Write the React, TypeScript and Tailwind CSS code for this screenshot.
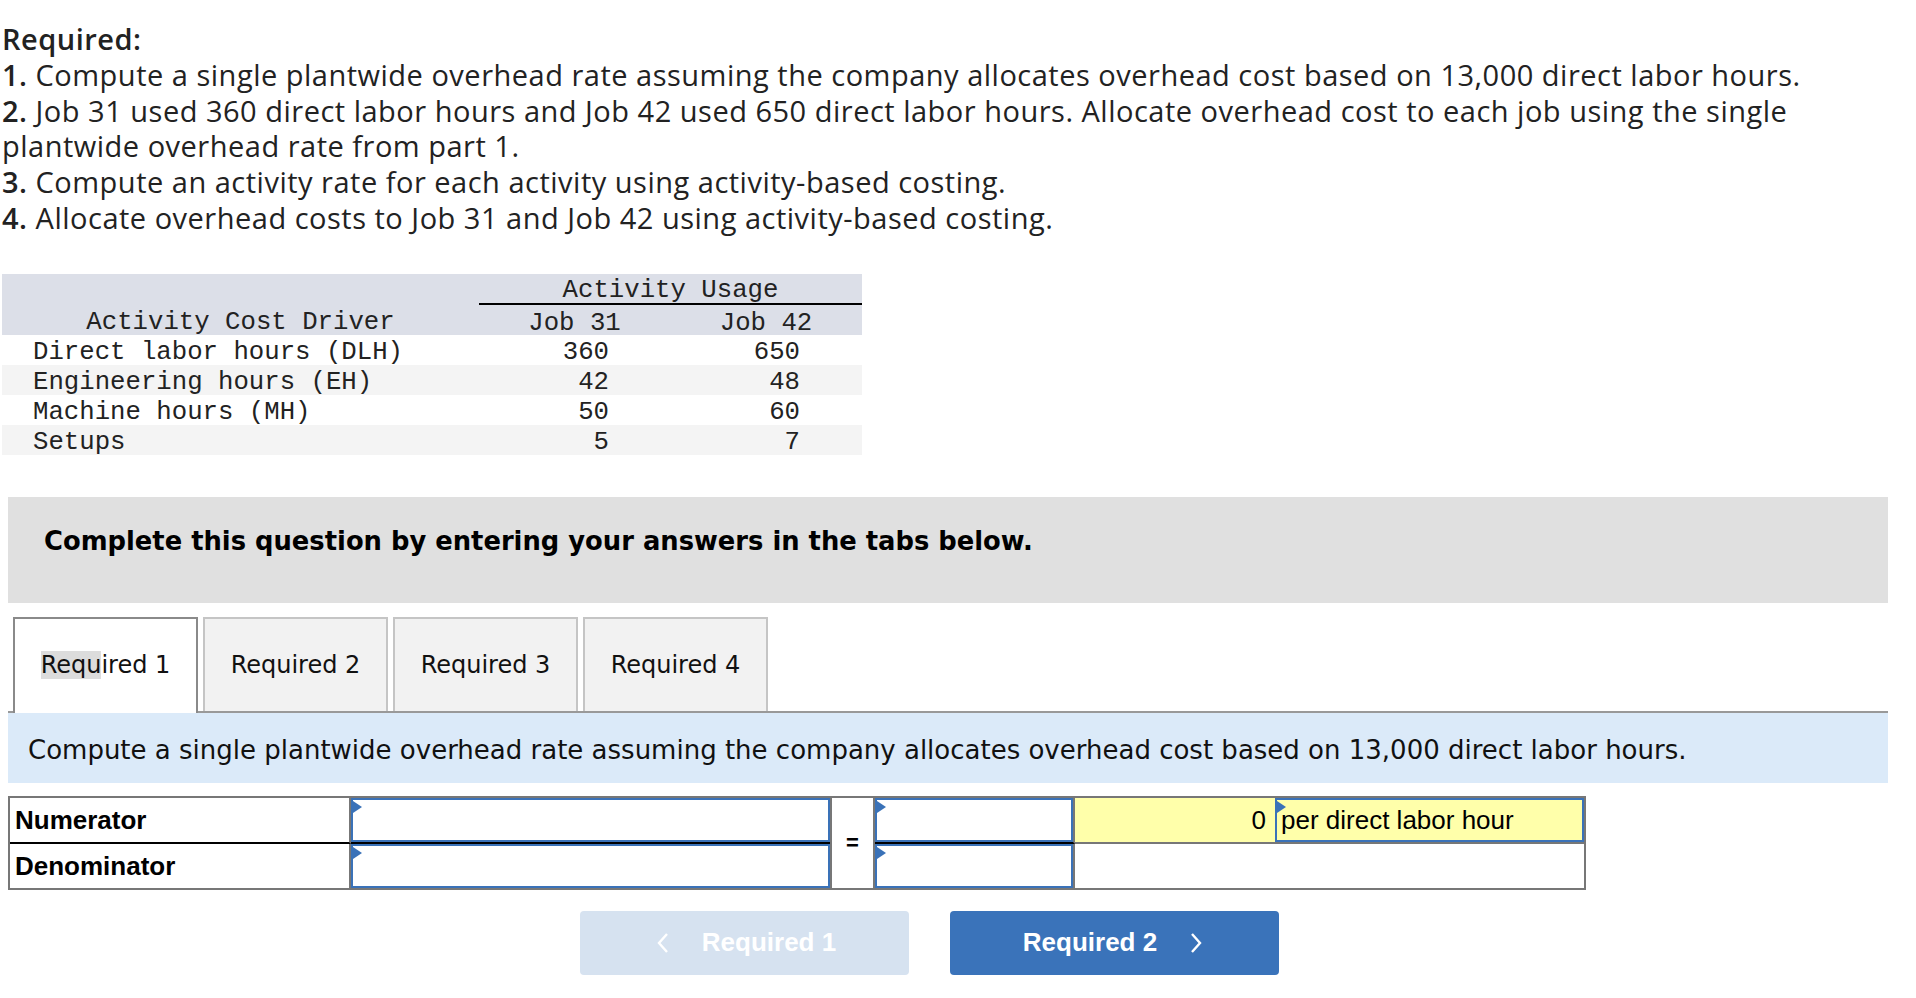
import React from "react";

const rows = [
	{ name: "Direct labor hours (DLH)", a: "360", b: "650" },
	{ name: "Engineering hours (EH)", a: "42", b: "48" },
	{ name: "Machine hours (MH)", a: "50", b: "60" },
	{ name: "Setups", a: "5", b: "7" },
];

function Flag() {
	return (
		<span className="absolute left-0 top-[1px] h-0 w-0 border-y-[6px] border-y-transparent border-l-[9px] border-l-[#3a72b8]" />
	);
}

function BlankInput({ yellow = false, children }: { yellow?: boolean; children?: React.ReactNode }) {
	return (
		<div
			className={`relative flex h-full w-full items-center border-2 border-[#3a72b8] px-[4px] ${
				yellow ? "bg-[#ffffaa]" : "bg-white"
			}`}
		>
			<Flag />
			{children}
		</div>
	);
}

export default function App() {
	const tabs = ["Required 1", "Required 2", "Required 3", "Required 4"];

	return (
		<div className="min-h-screen bg-white px-[2px] pt-[21px] text-[#222]">
			{/* question text */}
			<div className="font-['Open_Sans',sans-serif] text-[29px] leading-[35.8px] tracking-[0.5px]">
				<p className="font-semibold">Required:</p>
				<p>
					<b className="font-semibold">1.</b> Compute a single plantwide overhead rate assuming the company
					allocates overhead cost based on 13,000 direct labor hours.
				</p>
				<p>
					<b className="font-semibold">2.</b> Job 31 used 360 direct labor hours and Job 42 used 650 direct
					labor hours. Allocate overhead cost to each job using the single
					<br />
					plantwide overhead rate from part 1.
				</p>
				<p>
					<b className="font-semibold">3.</b> Compute an activity rate for each activity using activity-based
					costing.
				</p>
				<p>
					<b className="font-semibold">4.</b> Allocate overhead costs to Job 31 and Job 42 using activity-based
					costing.
				</p>
			</div>

			{/* activity table */}
			<table className="mt-[38px] w-[860px] border-collapse font-['Liberation_Mono',monospace] text-[25.7px] leading-[26px]">
				<thead className="bg-[#dcdfe8]">
					<tr className="h-[30px]">
						<th className="w-[477px]" />
						<th colSpan={2} className="border-b-2 border-black pt-[6px] text-center font-normal leading-[22px]">
							Activity Usage
						</th>
					</tr>
					<tr className="h-[30px]">
						<th className="pt-[7px] text-center font-normal leading-[23px]">Activity Cost Driver</th>
						<th className="w-[191px] pt-[7px] text-center font-normal leading-[23px]">Job 31</th>
						<th className="w-[192px] pt-[7px] text-center font-normal leading-[23px]">Job 42</th>
					</tr>
				</thead>
				<tbody>
					{rows.map((r, i) => (
						<tr key={r.name} className={`h-[30px] ${i % 2 === 1 ? "bg-[#f4f4f4]" : "bg-white"}`}>
							<td className="pl-[31px] pt-[5px] leading-[25px]">{r.name}</td>
							<td className="pr-[61px] pt-[5px] text-right leading-[25px]">{r.a}</td>
							<td className="pr-[62px] pt-[5px] text-right leading-[25px]">{r.b}</td>
						</tr>
					))}
				</tbody>
			</table>

			{/* answer area */}
			<div className="ml-[6px] mt-[42px] w-[1880px]">
				<div className="h-[106px] bg-[#e0e0e0] pl-[36px] pt-[30px] font-['DejaVu_Sans',sans-serif] text-[25.8px] font-bold leading-[28px] text-black">
					Complete this question by entering your answers in the tabs below.
				</div>

				<div className="mt-[14px] flex items-end gap-[5px] border-b-2 border-[#999] pl-[5px] font-['DejaVu_Sans',sans-serif] text-[24px] text-[#111]">
					{tabs.map((t, i) =>
						i === 0 ? (
							<div
								key={t}
								className="relative -mb-[2px] flex h-[96px] w-[185px] items-center justify-center border-x-2 border-t-2 border-[#8a8a8a] bg-white pb-[2px]"
							>
								<span>
									<span className="bg-[#dcdcdc]">Requ</span>ired 1
								</span>
							</div>
						) : (
							<div
								key={t}
								className="flex h-[94px] w-[185px] items-center justify-center border-x-2 border-t-2 border-[#c5c5c5] bg-[#f2f2f2]"
							>
								{t}
							</div>
						)
					)}
				</div>

				<div className="flex h-[70px] items-center bg-[#dbeaf9] pl-[20px] pt-[6px] font-['DejaVu_Sans',sans-serif] text-[26px] text-[#111]">
					Compute a single plantwide overhead rate assuming the company allocates overhead cost based on 13,000
					direct labor hours.
				</div>

				{/* ratio form */}
				<div className="mt-[13px] grid w-[1578px] grid-cols-[341px_479px_45px_200px_199px_310px] grid-rows-[46px_44px] border-2 border-[#777] font-['Liberation_Sans',Arial,sans-serif] text-black">
					<div className="flex items-center border-b-2 border-r-2 border-b-black border-r-[#777] pl-[5px] pt-[2px] text-[26px] font-bold">
						Numerator
					</div>
					<div className="border-b-2 border-black">
						<BlankInput />
					</div>
					<div className="row-span-2 flex items-center justify-center border-x-2 border-[#777] bg-white text-[22px] font-bold">
						=
					</div>
					<div className="border-b-2 border-r-2 border-b-black border-r-[#777]">
						<BlankInput />
					</div>
					<div className="flex items-center justify-end border-b-2 border-[#777] bg-[#ffffaa] pr-[8px] pt-[2px] text-[26px]">
						0
					</div>
					<div className="border-b-2 border-[#777] bg-[#ffffaa] pl-[1px]">
						<BlankInput yellow>
							<span className="pt-[2px] text-[26px]">per direct labor hour</span>
						</BlankInput>
					</div>

					<div className="flex items-center border-r-2 border-[#777] pl-[5px] pt-[2px] text-[26px] font-bold">
						Denominator
					</div>
					<div>
						<BlankInput />
					</div>
					<div className="border-r-2 border-[#777]">
						<BlankInput />
					</div>
					<div className="col-span-2 bg-white" />
				</div>

				{/* nav buttons */}
				<div className="mt-[21px] flex gap-[41px] pl-[572px] font-['Liberation_Sans',Arial,sans-serif] text-[26px] font-bold text-white">
					<button className="flex h-[64px] w-[329px] items-center justify-center gap-[33px] rounded-[4px] bg-[#d6e2f0] pl-[4px]">
						<svg width="12" height="20" viewBox="0 0 12 20" fill="none">
							<polyline points="10,1 2,10 10,19" stroke="white" strokeWidth="2.4" />
						</svg>
						<span>Required 1</span>
					</button>
					<button className="flex h-[64px] w-[329px] items-center justify-center gap-[33px] rounded-[4px] bg-[#3a73ba] pr-[4px]">
						<span>Required 2</span>
						<svg width="12" height="20" viewBox="0 0 12 20" fill="none">
							<polyline points="2,1 10,10 2,19" stroke="white" strokeWidth="2.4" />
						</svg>
					</button>
				</div>
			</div>
		</div>
	);
}
